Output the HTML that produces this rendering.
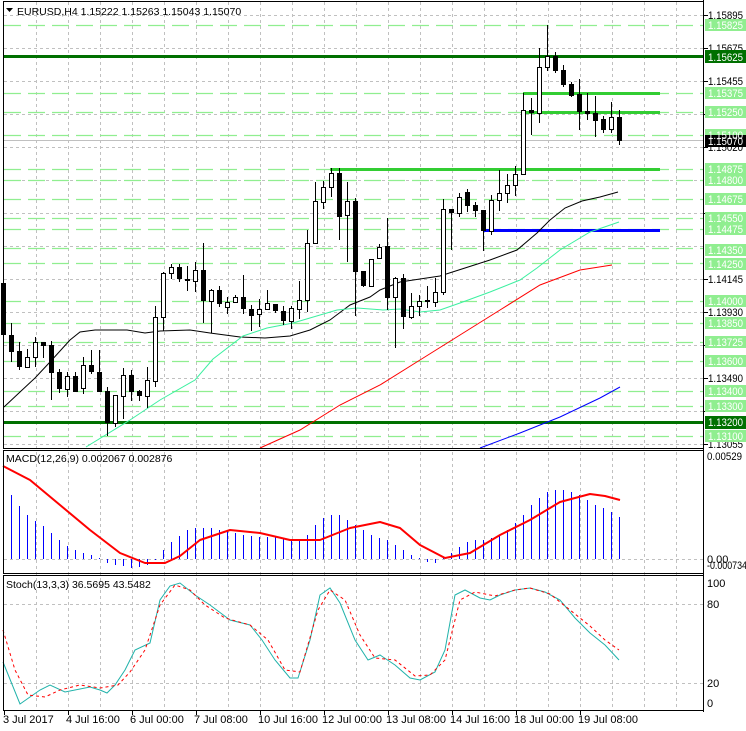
<!DOCTYPE html>
<html><head><meta charset="utf-8"><style>
html,body{margin:0;padding:0;background:#fff;width:746px;height:731px;overflow:hidden}
svg{display:block;font-family:"Liberation Sans",sans-serif;font-size:11px}
.r text{font-size:11px}
</style></head><body>
<svg width="746" height="731" viewBox="0 0 746 731" xmlns="http://www.w3.org/2000/svg">
<rect width="746" height="731" fill="#fff"/>
<g stroke="#c0c0c0" stroke-dasharray="3,3" stroke-width="1">
<path d="M4,15.5H703M4,48.5H703M4,81.5H703M4,114.5H703M4,147.5H703M4,180.5H703M4,213.5H703M4,246.5H703M4,279.5H703M4,312.5H703M4,345.5H703M4,378.5H703M4,411.5H703M4,444.5H703"/>
<path d="M4,559.5H703M4,604.5H703M4,683.5H703"/>
<path d="M36.5,2V710M68.5,2V710M100.5,2V710M132.5,2V710M164.5,2V710M196.5,2V710M228.5,2V710M260.5,2V710M292.5,2V710M324.5,2V710M356.5,2V710M388.5,2V710M420.5,2V710M452.5,2V710M484.5,2V710M516.5,2V710M548.5,2V710M580.5,2V710M612.5,2V710M644.5,2V710M676.5,2V710"/>
</g>
<g stroke="#90ee90" stroke-dasharray="17,7" stroke-width="1.2">
<path d="M4,25.5H703M4,93.5H703M4,112.5H703M4,135.5H703M4,169.5H703M4,180.5H703M4,199.5H703M4,218.5H703M4,229.5H703M4,248.5H703M4,263.5H703M4,301.5H703M4,323.5H703M4,342.5H703M4,361.5H703M4,391.5H703M4,406.5H703M4,436.5H703"/>
</g>
<path d="M4,140.5H703" stroke="#c0c0c0"/>
<path d="M4,56.5H703M4,422.5H703" stroke="#007000" stroke-width="3"/>
<path d="M523,93.5H660M523,112.5H660M330,169.5H660" stroke="#32cd32" stroke-width="3"/>
<path d="M483,230.5H660" stroke="#0000ff" stroke-width="3"/>
<polyline fill="none" stroke="#000" stroke-width="1" points="4,407 20,392 35,378 50,362 70,340 80,332 95,330 127,330 145,333 160,331 190,330 210,333 240,337 265,338 290,336 310,330 330,320 350,305 370,297 380,290 400,282 420,279 440,276 465,268 490,260 517,250 537,233 550,220 565,208 582,201 600,197 618,192"/>
<polyline fill="none" stroke="#3cf0a0" stroke-width="1" points="86,447 130,420 160,400 195,380 213,359 243,336 267,328 293,323 337,310 357,308 383,310 400,309 420,312 440,310 460,303 490,292 520,280 537,268 560,250 590,232 619,222"/>
<polyline fill="none" stroke="#ff0000" stroke-width="1" points="260,448 300,430 340,405 380,385 420,360 460,335 500,310 540,285 580,270 612,265"/>
<polyline fill="none" stroke="#0000ff" stroke-width="1" points="480,448 520,433 560,417 600,398 620,387"/>
<path stroke="#000" stroke-width="1" d="M3.5,279V340M11.5,323V362M19.5,342V370M27.5,349V368M35.5,337V367M43.5,342V358M51.5,341V400M59.5,369V393M67.5,372V397M75.5,372V392M83.5,357V394M91.5,350V374M99.5,350V392M107.5,387V436M115.5,395V427M123.5,368V419M131.5,370V401M139.5,390V401M147.5,367V408M155.5,306V387M163.5,272V331M171.5,264V279M179.5,264V282M187.5,266V291M195.5,262V292M203.5,243V323M211.5,289V333M219.5,286V307M227.5,297V314M235.5,295V302M243.5,275V314M251.5,305V331M259.5,299V327M267.5,290V309M275.5,304V313M283.5,306V325M291.5,306V329M299.5,281V319M307.5,230V312M315.5,182V243M323.5,181V209M331.5,168V197M339.5,168V240M347.5,182V262M355.5,198V316M363.5,271V287M371.5,259V286M379.5,244V258M387.5,218V310M395.5,277V348M403.5,274V329M411.5,293V319M419.5,295V316M427.5,286V308M435.5,278V307M443.5,199V295M451.5,209V250M459.5,193V217M467.5,189V212M475.5,202V217M483.5,210V251M491.5,195V235M499.5,170V211M507.5,174V203M515.5,166V196M523.5,93V174M531.5,98V135M539.5,48V123M547.5,25V71M555.5,52V73M563.5,65V87M571.5,82V97M579.5,79V130M587.5,93V120M595.5,96V137M603.5,116V133M611.5,102V133M619.5,110V145"/>
<g fill="#000">
<rect x="1" y="283" width="5" height="52"/><rect x="9" y="335" width="5" height="17"/><rect x="17" y="351" width="5" height="16"/><rect x="41" y="342" width="5" height="4"/><rect x="49" y="345" width="5" height="28"/><rect x="57" y="372" width="5" height="17"/><rect x="73" y="376" width="5" height="16"/><rect x="89" y="365" width="5" height="7"/><rect x="97" y="372" width="5" height="20"/><rect x="105" y="391" width="5" height="32"/><rect x="129" y="375" width="5" height="17"/><rect x="137" y="391" width="5" height="5"/><rect x="177" y="267" width="5" height="12"/><rect x="185" y="279" width="5" height="2"/><rect x="201" y="270" width="5" height="31"/><rect x="217" y="290" width="5" height="14"/><rect x="241" y="297" width="5" height="12"/><rect x="249" y="309" width="5" height="7"/><rect x="273" y="304" width="5" height="7"/><rect x="281" y="311" width="5" height="10"/><rect x="337" y="173" width="5" height="44"/><rect x="353" y="201" width="5" height="71"/><rect x="361" y="271" width="5" height="15"/><rect x="385" y="246" width="5" height="52"/><rect x="401" y="278" width="5" height="39"/><rect x="425" y="300" width="5" height="2"/><rect x="449" y="209" width="5" height="4"/><rect x="465" y="192" width="5" height="14"/><rect x="473" y="205" width="5" height="6"/><rect x="481" y="210" width="5" height="21"/><rect x="529" y="110" width="5" height="3"/><rect x="553" y="56" width="5" height="15"/><rect x="561" y="70" width="5" height="15"/><rect x="569" y="84" width="5" height="12"/><rect x="577" y="94" width="5" height="18"/><rect x="585" y="111" width="5" height="3"/><rect x="593" y="113" width="5" height="8"/><rect x="601" y="119" width="5" height="11"/><rect x="617" y="117" width="5" height="24"/>
</g>
<g fill="#fff" stroke="#000" stroke-width="1">
<rect x="25.5" y="357.5" width="4" height="10"/><rect x="33.5" y="342.5" width="4" height="15"/><rect x="65.5" y="376.5" width="4" height="13"/><rect x="81.5" y="365.5" width="4" height="23"/><rect x="113.5" y="395.5" width="4" height="28"/><rect x="121.5" y="375.5" width="4" height="21"/><rect x="145.5" y="380.5" width="4" height="16"/><rect x="153.5" y="317.5" width="4" height="64"/><rect x="161.5" y="273.5" width="4" height="44"/><rect x="169.5" y="267.5" width="4" height="6"/><rect x="193.5" y="270.5" width="4" height="11"/><rect x="209.5" y="290.5" width="4" height="11"/><rect x="225.5" y="302.5" width="4" height="5"/><rect x="233.5" y="297.5" width="4" height="5"/><rect x="257.5" y="309.5" width="4" height="5"/><rect x="265.5" y="303.5" width="4" height="6"/><rect x="289.5" y="308.5" width="4" height="13"/><rect x="297.5" y="300.5" width="4" height="9"/><rect x="305.5" y="243.5" width="4" height="57"/><rect x="313.5" y="201.5" width="4" height="42"/><rect x="321.5" y="187.5" width="4" height="15"/><rect x="329.5" y="173.5" width="4" height="14"/><rect x="345.5" y="201.5" width="4" height="14"/><rect x="369.5" y="259.5" width="4" height="27"/><rect x="377.5" y="247.5" width="4" height="11"/><rect x="393.5" y="278.5" width="4" height="19"/><rect x="409.5" y="306.5" width="4" height="11"/><rect x="417.5" y="301.5" width="4" height="5"/><rect x="433.5" y="292.5" width="4" height="10"/><rect x="441.5" y="209.5" width="4" height="83"/><rect x="457.5" y="197.5" width="4" height="16"/><rect x="489.5" y="200.5" width="4" height="31"/><rect x="497.5" y="193.5" width="4" height="7"/><rect x="505.5" y="185.5" width="4" height="8"/><rect x="513.5" y="174.5" width="4" height="11"/><rect x="521.5" y="110.5" width="4" height="64"/><rect x="537.5" y="67.5" width="4" height="46"/><rect x="545.5" y="56.5" width="4" height="11"/><rect x="609.5" y="117.5" width="4" height="12"/>
</g>
<path stroke="#0000ff" stroke-width="1" d="M3.5,559V483M11.5,559V495M19.5,559V506M27.5,559V515M35.5,559V521M43.5,559V526M51.5,559V533M59.5,559V540M67.5,559V546M75.5,559V550M83.5,559V553M91.5,559V555M99.5,559V558M107.5,559V563M115.5,559V565M123.5,559V566M131.5,559V568M139.5,559V567M147.5,559V565M155.5,559V560M163.5,559V550M171.5,559V542M179.5,559V536M187.5,559V530M195.5,559V528M203.5,559V528M211.5,559V528M219.5,559V530M227.5,559V531M235.5,559V533M243.5,559V535M251.5,559V536M259.5,559V537M267.5,559V537M275.5,559V537M283.5,559V538M291.5,559V540M299.5,559V540M307.5,559V535M315.5,559V525M323.5,559V518M331.5,559V515M339.5,559V515M347.5,559V520M355.5,559V525M363.5,559V530M371.5,559V535M379.5,559V538M387.5,559V540M395.5,559V545M403.5,559V550M411.5,559V555M419.5,559V558M427.5,559V562M435.5,559V563M443.5,559V558M451.5,559V553M459.5,559V547M467.5,559V542M475.5,559V540M483.5,559V540M491.5,559V538M499.5,559V535M507.5,559V530M515.5,559V523M523.5,559V515M531.5,559V505M539.5,559V498M547.5,559V492M555.5,559V490M563.5,559V490M571.5,559V492M579.5,559V495M587.5,559V500M595.5,559V505M603.5,559V508M611.5,559V512M619.5,559V517"/>
<polyline fill="none" stroke="#ff0000" stroke-width="2" stroke-linejoin="round" points="3,466 30,480 60,505 90,530 120,553 145,563 165,563 180,556 200,540 230,530 260,533 290,540 320,540 350,528 380,522 400,528 420,545 445,558 470,553 500,535 530,520 560,502 590,494 605,496 620,500"/>
<polyline fill="none" stroke="#20b2aa" stroke-width="1" points="3,662 20,704 40,690 50,685 65,692 90,687 100,690 107,693 115,685 125,670 135,650 150,643 160,600 170,586 180,583 195,595 210,605 230,620 250,625 262,640 275,660 290,678 298,678 310,640 320,595 330,588 340,603 355,640 368,660 380,655 395,665 410,678 420,680 435,672 445,650 455,595 465,590 480,598 490,600 500,595 515,590 530,588 545,592 560,600 575,618 590,633 605,645 619,660"/>
<polyline fill="none" stroke="#ff0000" stroke-width="1" stroke-dasharray="3,3" points="3,630 15,670 28,695 45,697 60,690 80,685 100,688 118,685 130,672 145,650 160,605 175,585 190,590 205,605 225,618 250,625 268,640 285,670 300,672 318,610 330,590 345,600 360,635 375,658 395,660 415,676 430,675 445,660 460,600 475,592 495,596 515,590 530,588 550,594 570,610 590,626 605,640 619,650"/>
<g fill="none" stroke="#000" stroke-width="1">
<rect x="3.5" y="1.5" width="700" height="447"/>
<rect x="3.5" y="450.5" width="700" height="123"/>
<rect x="3.5" y="575.5" width="700" height="135"/>
</g>
<path stroke="#000" d="M703.5,0V712M704,15.5h4M704,48.5h4M704,81.5h4M704,114.5h4M704,147.5h4M704,213.5h4M704,279.5h4M704,312.5h4M704,345.5h4M704,378.5h4M704,411.5h4M704,444.5h4M4.5,710v5M68.5,710v5M132.5,710v5M196.5,710v5M260.5,710v5M324.5,710v5M388.5,710v5M452.5,710v5M516.5,710v5M580.5,710v5"/>
<path d="M6,8h7l-3.5,4z" fill="#000"/>
<text x="17" y="15" fill="#000" font-size="10.5">EURUSD,H4  1.15222 1.15263 1.15043 1.15070</text>
<text x="6" y="462" fill="#000" font-size="10.5">MACD(12,26,9) 0.002067 0.002876</text>
<text x="6" y="588" fill="#000" font-size="10.5">Stoch(13,3,3) 36.5695 43.5482</text>
<g fill="#000" class="r">
<text x="708" y="19" textLength="35" lengthAdjust="spacingAndGlyphs">1.15895</text>
<text x="708" y="52" textLength="35" lengthAdjust="spacingAndGlyphs">1.15675</text>
<text x="708" y="85" textLength="35" lengthAdjust="spacingAndGlyphs">1.15455</text>
<text x="708" y="151" textLength="35" lengthAdjust="spacingAndGlyphs">1.15020</text>
<text x="708" y="283" textLength="35" lengthAdjust="spacingAndGlyphs">1.14145</text>
<text x="708" y="316" textLength="35" lengthAdjust="spacingAndGlyphs">1.13930</text>
<text x="708" y="382" textLength="35" lengthAdjust="spacingAndGlyphs">1.13490</text>
<text x="708" y="448" textLength="35" lengthAdjust="spacingAndGlyphs">1.13055</text>
<text x="707" y="460" textLength="35" lengthAdjust="spacingAndGlyphs">0.00529</text>
<text x="707" y="563">0.00</text>
<text x="707" y="569" textLength="40" lengthAdjust="spacingAndGlyphs">-0.000734</text>
<text x="707" y="587">100</text>
<text x="707" y="608">80</text>
<text x="707" y="687">20</text>
<text x="707" y="707">0</text>
</g>
<g fill="#90ee90">
<rect x="705" y="19" width="41" height="12"/><rect x="705" y="87" width="41" height="12"/><rect x="705" y="106" width="41" height="12"/><rect x="705" y="129" width="41" height="12"/><rect x="705" y="163" width="41" height="12"/><rect x="705" y="174" width="41" height="12"/><rect x="705" y="193" width="41" height="12"/><rect x="705" y="212" width="41" height="12"/><rect x="705" y="223" width="41" height="12"/><rect x="705" y="244" width="41" height="12"/><rect x="705" y="258" width="41" height="12"/><rect x="705" y="295" width="41" height="12"/><rect x="705" y="317" width="41" height="12"/><rect x="705" y="336" width="41" height="12"/><rect x="705" y="355" width="41" height="12"/><rect x="705" y="385" width="41" height="12"/><rect x="705" y="400" width="41" height="12"/><rect x="705" y="430" width="41" height="12"/>
</g>
<rect x="705" y="50" width="41" height="13" fill="#007000"/>
<rect x="705" y="416" width="41" height="13" fill="#007000"/>
<rect x="705" y="135" width="41" height="12" fill="#000"/>
<g fill="#fff" class="r">
<text x="708" y="29" textLength="35" lengthAdjust="spacingAndGlyphs">1.15825</text>
<text x="708" y="61" textLength="35" lengthAdjust="spacingAndGlyphs">1.15625</text>
<text x="708" y="97" textLength="35" lengthAdjust="spacingAndGlyphs">1.15375</text>
<text x="708" y="116" textLength="35" lengthAdjust="spacingAndGlyphs">1.15250</text>
<text x="708" y="139" textLength="35" lengthAdjust="spacingAndGlyphs">1.15100</text>
<text x="708" y="145" textLength="35" lengthAdjust="spacingAndGlyphs">1.15070</text>
<text x="708" y="173" textLength="35" lengthAdjust="spacingAndGlyphs">1.14875</text>
<text x="708" y="184" textLength="35" lengthAdjust="spacingAndGlyphs">1.14800</text>
<text x="708" y="203" textLength="35" lengthAdjust="spacingAndGlyphs">1.14675</text>
<text x="708" y="222" textLength="35" lengthAdjust="spacingAndGlyphs">1.14550</text>
<text x="708" y="233" textLength="35" lengthAdjust="spacingAndGlyphs">1.14475</text>
<text x="708" y="254" textLength="35" lengthAdjust="spacingAndGlyphs">1.14350</text>
<text x="708" y="268" textLength="35" lengthAdjust="spacingAndGlyphs">1.14250</text>
<text x="708" y="305" textLength="35" lengthAdjust="spacingAndGlyphs">1.14000</text>
<text x="708" y="327" textLength="35" lengthAdjust="spacingAndGlyphs">1.13850</text>
<text x="708" y="346" textLength="35" lengthAdjust="spacingAndGlyphs">1.13725</text>
<text x="708" y="365" textLength="35" lengthAdjust="spacingAndGlyphs">1.13600</text>
<text x="708" y="395" textLength="35" lengthAdjust="spacingAndGlyphs">1.13400</text>
<text x="708" y="410" textLength="35" lengthAdjust="spacingAndGlyphs">1.13300</text>
<text x="708" y="426" textLength="35" lengthAdjust="spacingAndGlyphs">1.13200</text>
<text x="708" y="440" textLength="35" lengthAdjust="spacingAndGlyphs">1.13100</text>
</g>
<g fill="#000">
<text x="3" y="723">3 Jul 2017</text>
<text x="66" y="723">4 Jul 16:00</text>
<text x="130" y="723">6 Jul 00:00</text>
<text x="194" y="723">7 Jul 08:00</text>
<text x="258" y="723">10 Jul 16:00</text>
<text x="322" y="723">12 Jul 00:00</text>
<text x="386" y="723">13 Jul 08:00</text>
<text x="450" y="723">14 Jul 16:00</text>
<text x="514" y="723">18 Jul 00:00</text>
<text x="578" y="723">19 Jul 08:00</text>
</g>
</svg>
</body></html>
